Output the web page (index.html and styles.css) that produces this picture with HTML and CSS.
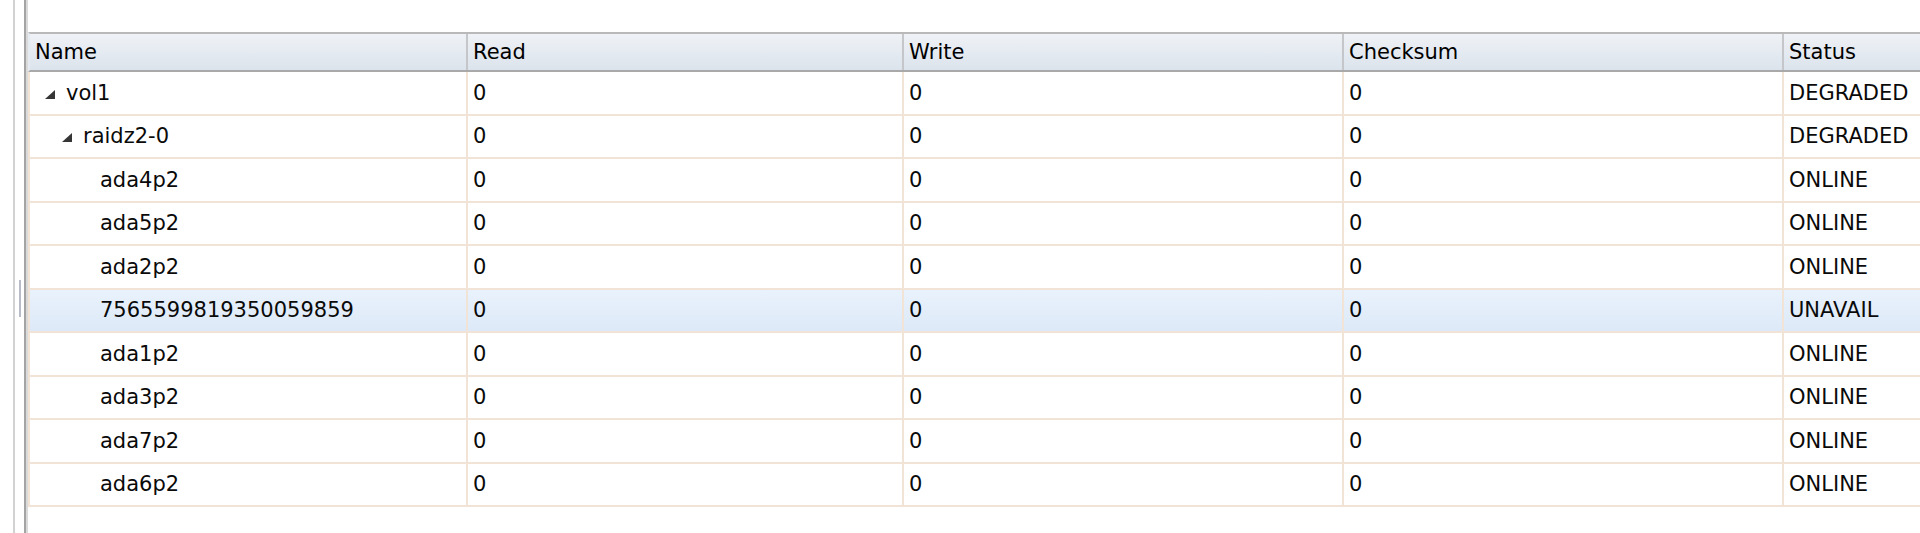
FILE: index.html
```html
<!DOCTYPE html>
<html lang="en">
<head>
    <meta charset="UTF-8">
    <title>Pool Status</title>
    <link rel="stylesheet" href="styles.css">
</head>
<body>
    <div class="layout">
        <div class="left-strip"></div>
        <div class="splitter"><div class="handle"></div></div>
        <div class="panel">
            <div class="grid">
                <div class="row header">
                    <div class="cell">Name</div>
                    <div class="cell">Read</div>
                    <div class="cell">Write</div>
                    <div class="cell">Checksum</div>
                    <div class="cell">Status</div>
                </div>

                <div class="row">
                    <div class="cell tree lvl-0"><span class="expander"><svg width="10" height="9" viewBox="0 0 10 9"><polygon points="10,0 10,9 0,9" /></svg></span>vol1</div>
                    <div class="cell">0</div>
                    <div class="cell">0</div>
                    <div class="cell">0</div>
                    <div class="cell">DEGRADED</div>
                </div>
                <div class="row">
                    <div class="cell tree lvl-1"><span class="expander"><svg width="10" height="9" viewBox="0 0 10 9"><polygon points="10,0 10,9 0,9" /></svg></span>raidz2-0</div>
                    <div class="cell">0</div>
                    <div class="cell">0</div>
                    <div class="cell">0</div>
                    <div class="cell">DEGRADED</div>
                </div>
                <div class="row">
                    <div class="cell tree lvl-2"><span class="expander"></span>ada4p2</div>
                    <div class="cell">0</div>
                    <div class="cell">0</div>
                    <div class="cell">0</div>
                    <div class="cell">ONLINE</div>
                </div>
                <div class="row">
                    <div class="cell tree lvl-2"><span class="expander"></span>ada5p2</div>
                    <div class="cell">0</div>
                    <div class="cell">0</div>
                    <div class="cell">0</div>
                    <div class="cell">ONLINE</div>
                </div>
                <div class="row">
                    <div class="cell tree lvl-2"><span class="expander"></span>ada2p2</div>
                    <div class="cell">0</div>
                    <div class="cell">0</div>
                    <div class="cell">0</div>
                    <div class="cell">ONLINE</div>
                </div>
                <div class="row selected">
                    <div class="cell tree lvl-2"><span class="expander"></span>7565599819350059859</div>
                    <div class="cell">0</div>
                    <div class="cell">0</div>
                    <div class="cell">0</div>
                    <div class="cell">UNAVAIL</div>
                </div>
                <div class="row">
                    <div class="cell tree lvl-2"><span class="expander"></span>ada1p2</div>
                    <div class="cell">0</div>
                    <div class="cell">0</div>
                    <div class="cell">0</div>
                    <div class="cell">ONLINE</div>
                </div>
                <div class="row">
                    <div class="cell tree lvl-2"><span class="expander"></span>ada3p2</div>
                    <div class="cell">0</div>
                    <div class="cell">0</div>
                    <div class="cell">0</div>
                    <div class="cell">ONLINE</div>
                </div>
                <div class="row">
                    <div class="cell tree lvl-2"><span class="expander"></span>ada7p2</div>
                    <div class="cell">0</div>
                    <div class="cell">0</div>
                    <div class="cell">0</div>
                    <div class="cell">ONLINE</div>
                </div>
                <div class="row">
                    <div class="cell tree lvl-2"><span class="expander"></span>ada6p2</div>
                    <div class="cell">0</div>
                    <div class="cell">0</div>
                    <div class="cell">0</div>
                    <div class="cell">ONLINE</div>
                </div>
            </div>
        </div>
    </div>
</body>
</html>
```

FILE: styles.css
```css
html, body {
    margin: 0;
    padding: 0;
    background: #fff;
}
body {
    font-family: "DejaVu Sans", Verdana, sans-serif;
    font-size: 21px;
    color: #0a0a0a;
    overflow: hidden;
}
.layout {
    display: flex;
    height: 533px;
    width: 1920px;
    overflow: hidden;
}
.left-strip {
    width: 13px;
    flex: none;
    border-right: 2px solid #d2d2d2;
}
.splitter {
    width: 9px;
    flex: none;
}
.handle {
    margin: 280px 0 0 4px;
    width: 2px;
    height: 37px;
    background: #b7bcc6;
}
.panel {
    flex: 1;
    min-width: 0;
    border-left: 2px solid #a4a4a4;
    box-shadow: inset 2px 0 0 #dadada;
    padding: 32px 0 0 2px;
    overflow: hidden;
}
.grid {
    width: 2100px;
}
.row {
    display: grid;
    grid-template-columns: 438px 436px 440px 440px 1fr;
    height: 43.5px;
    box-sizing: border-box;
    border-left: 2px solid #f1e3d5;
    border-bottom: 2px solid #f1e3d5;
    background: #fff;
}
.row.selected {
    background: linear-gradient(#e9f2fc, #dde9f8);
}
.cell {
    display: flex;
    align-items: center;
    padding: 0 5px;
    border-right: 2px solid #f1e3d5;
    white-space: nowrap;
    overflow: hidden;
}
.row.header {
    height: 40px;
    border-top: 2px solid #b9b9b9;
    border-bottom: 2px solid #a9a9a9;
    border-left: 2px solid #e6ebf1;
    background: linear-gradient(#eff2f6, #dbe3ec);
}
.row.header .cell {
    border-right: 2px solid #c4c6c9;
    color: #000;
}
.tree.lvl-1 {
    padding-left: 22px;
}
.tree.lvl-2 {
    padding-left: 39px;
}
.expander {
    flex: none;
    width: 31px;
    display: flex;
    align-items: center;
    padding-top: 3px;
}
.expander svg {
    margin-left: 10px;
    fill: #363636;
}
```
